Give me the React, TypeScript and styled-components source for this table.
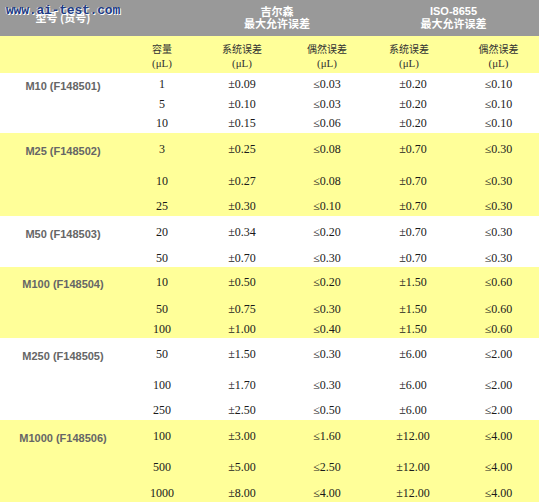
import React from "react";
import styled, { createGlobalStyle } from "styled-components";

const Global = createGlobalStyle`
  html, body { margin: 0; padding: 0; background: #ffffff; }
  body { overflow: hidden; }
`;

const COLS = "126px 72px 88px 82px 90px 81px";
const YELLOW = "#ffff99";
const CJK = `"Noto Sans CJK SC", "Liberation Sans", sans-serif`;
const SERIF = `"Liberation Serif", "Noto Sans CJK SC", serif`;

const Table = styled.div`
  position: relative;
  width: 539px;
  display: flex;
  flex-direction: column;
`;

const Watermark = styled.div`
  position: absolute;
  left: 6px;
  top: 3px;
  font-family: "Liberation Mono", monospace;
  font-weight: bold;
  font-size: 13px;
  letter-spacing: -0.2px;
  color: #1d3b86;
  text-shadow: 1px 1px 0 #ffffff, -1px 0 0 rgba(255, 255, 255, 0.6);
  pointer-events: none;
  z-index: 2;
`;

const HeadRow = styled.div`
  display: grid;
  grid-template-columns: ${COLS};
  height: 36px;
  background: #999999;
  color: #ffffff;
  font-family: ${CJK};
  font-weight: bold;
  font-size: 11px;
  line-height: 12px;
`;

const HeadCell = styled.div<{ $span?: number; $pr?: number }>`
  grid-column: span ${(p) => p.$span ?? 1};
  display: flex;
  flex-direction: column;
  align-items: center;
  justify-content: center;
  text-align: center;
  padding-right: ${(p) => p.$pr ?? 0}px;
  padding-bottom: 2px;
`;

const Latin = styled.span`
  font-family: "Liberation Sans", sans-serif;
  font-weight: bold;
`;

const SubRow = styled.div`
  display: grid;
  grid-template-columns: ${COLS};
  height: 37px;
  background: ${YELLOW};
  color: #333333;
  font-size: 10px;
  line-height: 14px;
`;

const SubCell = styled.div<{ $shift?: number }>`
  display: flex;
  flex-direction: column;
  align-items: center;
  justify-content: center;
  padding-top: 3px;
  padding-right: ${(p) => p.$shift ?? 0}px;
  font-family: ${CJK};
`;

const Unit = styled.span`
  font-family: ${SERIF};
  font-size: 11px;
`;

const Group = styled.div<{ $bg: string; $rows: string }>`
  display: grid;
  grid-template-columns: ${COLS};
  grid-template-rows: ${(p) => p.$rows};
  background: ${(p) => p.$bg};
`;

const Label = styled.div`
  grid-column: 1;
  grid-row: 1;
  display: flex;
  align-items: center;
  justify-content: center;
  padding-top: 3px;
  font-family: "Liberation Sans", sans-serif;
  font-weight: bold;
  font-size: 11px;
  color: #666666;
`;

const Cell = styled.div<{ $col: number; $row: number }>`
  grid-column: ${(p) => p.$col};
  grid-row: ${(p) => p.$row};
  display: flex;
  align-items: center;
  justify-content: center;
  font-family: ${SERIF};
  font-size: 12px;
  color: #1a1a1a;
  white-space: nowrap;
`;

type Row = [string, string, string, string, string, number];
type G = { label: string; yellow: boolean; rows: Row[] };

const groups: G[] = [
  {
    label: "M10 (F148501)",
    yellow: false,
    rows: [
      ["1", "±0.09", "≤0.03", "±0.20", "≤0.10", 22],
      ["5", "±0.10", "≤0.03", "±0.20", "≤0.10", 19],
      ["10", "±0.15", "≤0.06", "±0.20", "≤0.10", 19],
    ],
  },
  {
    label: "M25 (F148502)",
    yellow: true,
    rows: [
      ["3", "±0.25", "≤0.08", "±0.70", "≤0.30", 32],
      ["10", "±0.27", "≤0.08", "±0.70", "≤0.30", 32],
      ["25", "±0.30", "≤0.10", "±0.70", "≤0.30", 19],
    ],
  },
  {
    label: "M50 (F148503)",
    yellow: false,
    rows: [
      ["20", "±0.34", "≤0.20", "±0.70", "≤0.30", 33],
      ["50", "±0.70", "≤0.30", "±0.70", "≤0.30", 18],
    ],
  },
  {
    label: "M100 (F148504)",
    yellow: true,
    rows: [
      ["10", "±0.50", "≤0.20", "±1.50", "≤0.60", 31],
      ["50", "±0.75", "≤0.30", "±1.50", "≤0.60", 22],
      ["100", "±1.00", "≤0.40", "±1.50", "≤0.60", 18],
    ],
  },
  {
    label: "M250 (F148505)",
    yellow: false,
    rows: [
      ["50", "±1.50", "≤0.30", "±6.00", "≤2.00", 32],
      ["100", "±1.70", "≤0.30", "±6.00", "≤2.00", 30],
      ["250", "±2.50", "≤0.50", "±6.00", "≤2.00", 20],
    ],
  },
  {
    label: "M1000 (F148506)",
    yellow: true,
    rows: [
      ["100", "±3.00", "≤1.60", "±12.00", "≤4.00", 32],
      ["500", "±5.00", "≤2.50", "±12.00", "≤4.00", 30],
      ["1000", "±8.00", "≤4.00", "±12.00", "≤4.00", 22],
    ],
  },
];

export default function App() {
  return (
    <>
      <Global />
      <Table>
        <Watermark>www.ai-test.com</Watermark>
        <HeadRow>
          <HeadCell>型号 (货号)</HeadCell>
          <HeadCell />
          <HeadCell $span={2} $pr={12}>
            <span>吉尔森</span>
            <span>最大允许误差</span>
          </HeadCell>
          <HeadCell $span={2}>
            <Latin>ISO-8655</Latin>
            <span>最大允许误差</span>
          </HeadCell>
        </HeadRow>
        <SubRow>
          <SubCell />
          <SubCell>
            <span>容量</span>
            <Unit>(μL)</Unit>
          </SubCell>
          <SubCell>
            <span>系统误差</span>
            <Unit>(μL)</Unit>
          </SubCell>
          <SubCell>
            <span>偶然误差</span>
            <Unit>(μL)</Unit>
          </SubCell>
          <SubCell $shift={8}>
            <span>系统误差</span>
            <Unit>(μL)</Unit>
          </SubCell>
          <SubCell>
            <span>偶然误差</span>
            <Unit>(μL)</Unit>
          </SubCell>
        </SubRow>
        {groups.map((g) => (
          <Group
            key={g.label}
            $bg={g.yellow ? YELLOW : "#ffffff"}
            $rows={g.rows.map((r) => `${r[5]}px`).join(" ")}
          >
            <Label>{g.label}</Label>
            {g.rows.map((r, i) =>
              r.slice(0, 5).map((v, c) => (
                <Cell key={`${i}-${c}`} $col={c + 2} $row={i + 1}>
                  {v}
                </Cell>
              ))
            )}
          </Group>
        ))}
      </Table>
    </>
  );
}
